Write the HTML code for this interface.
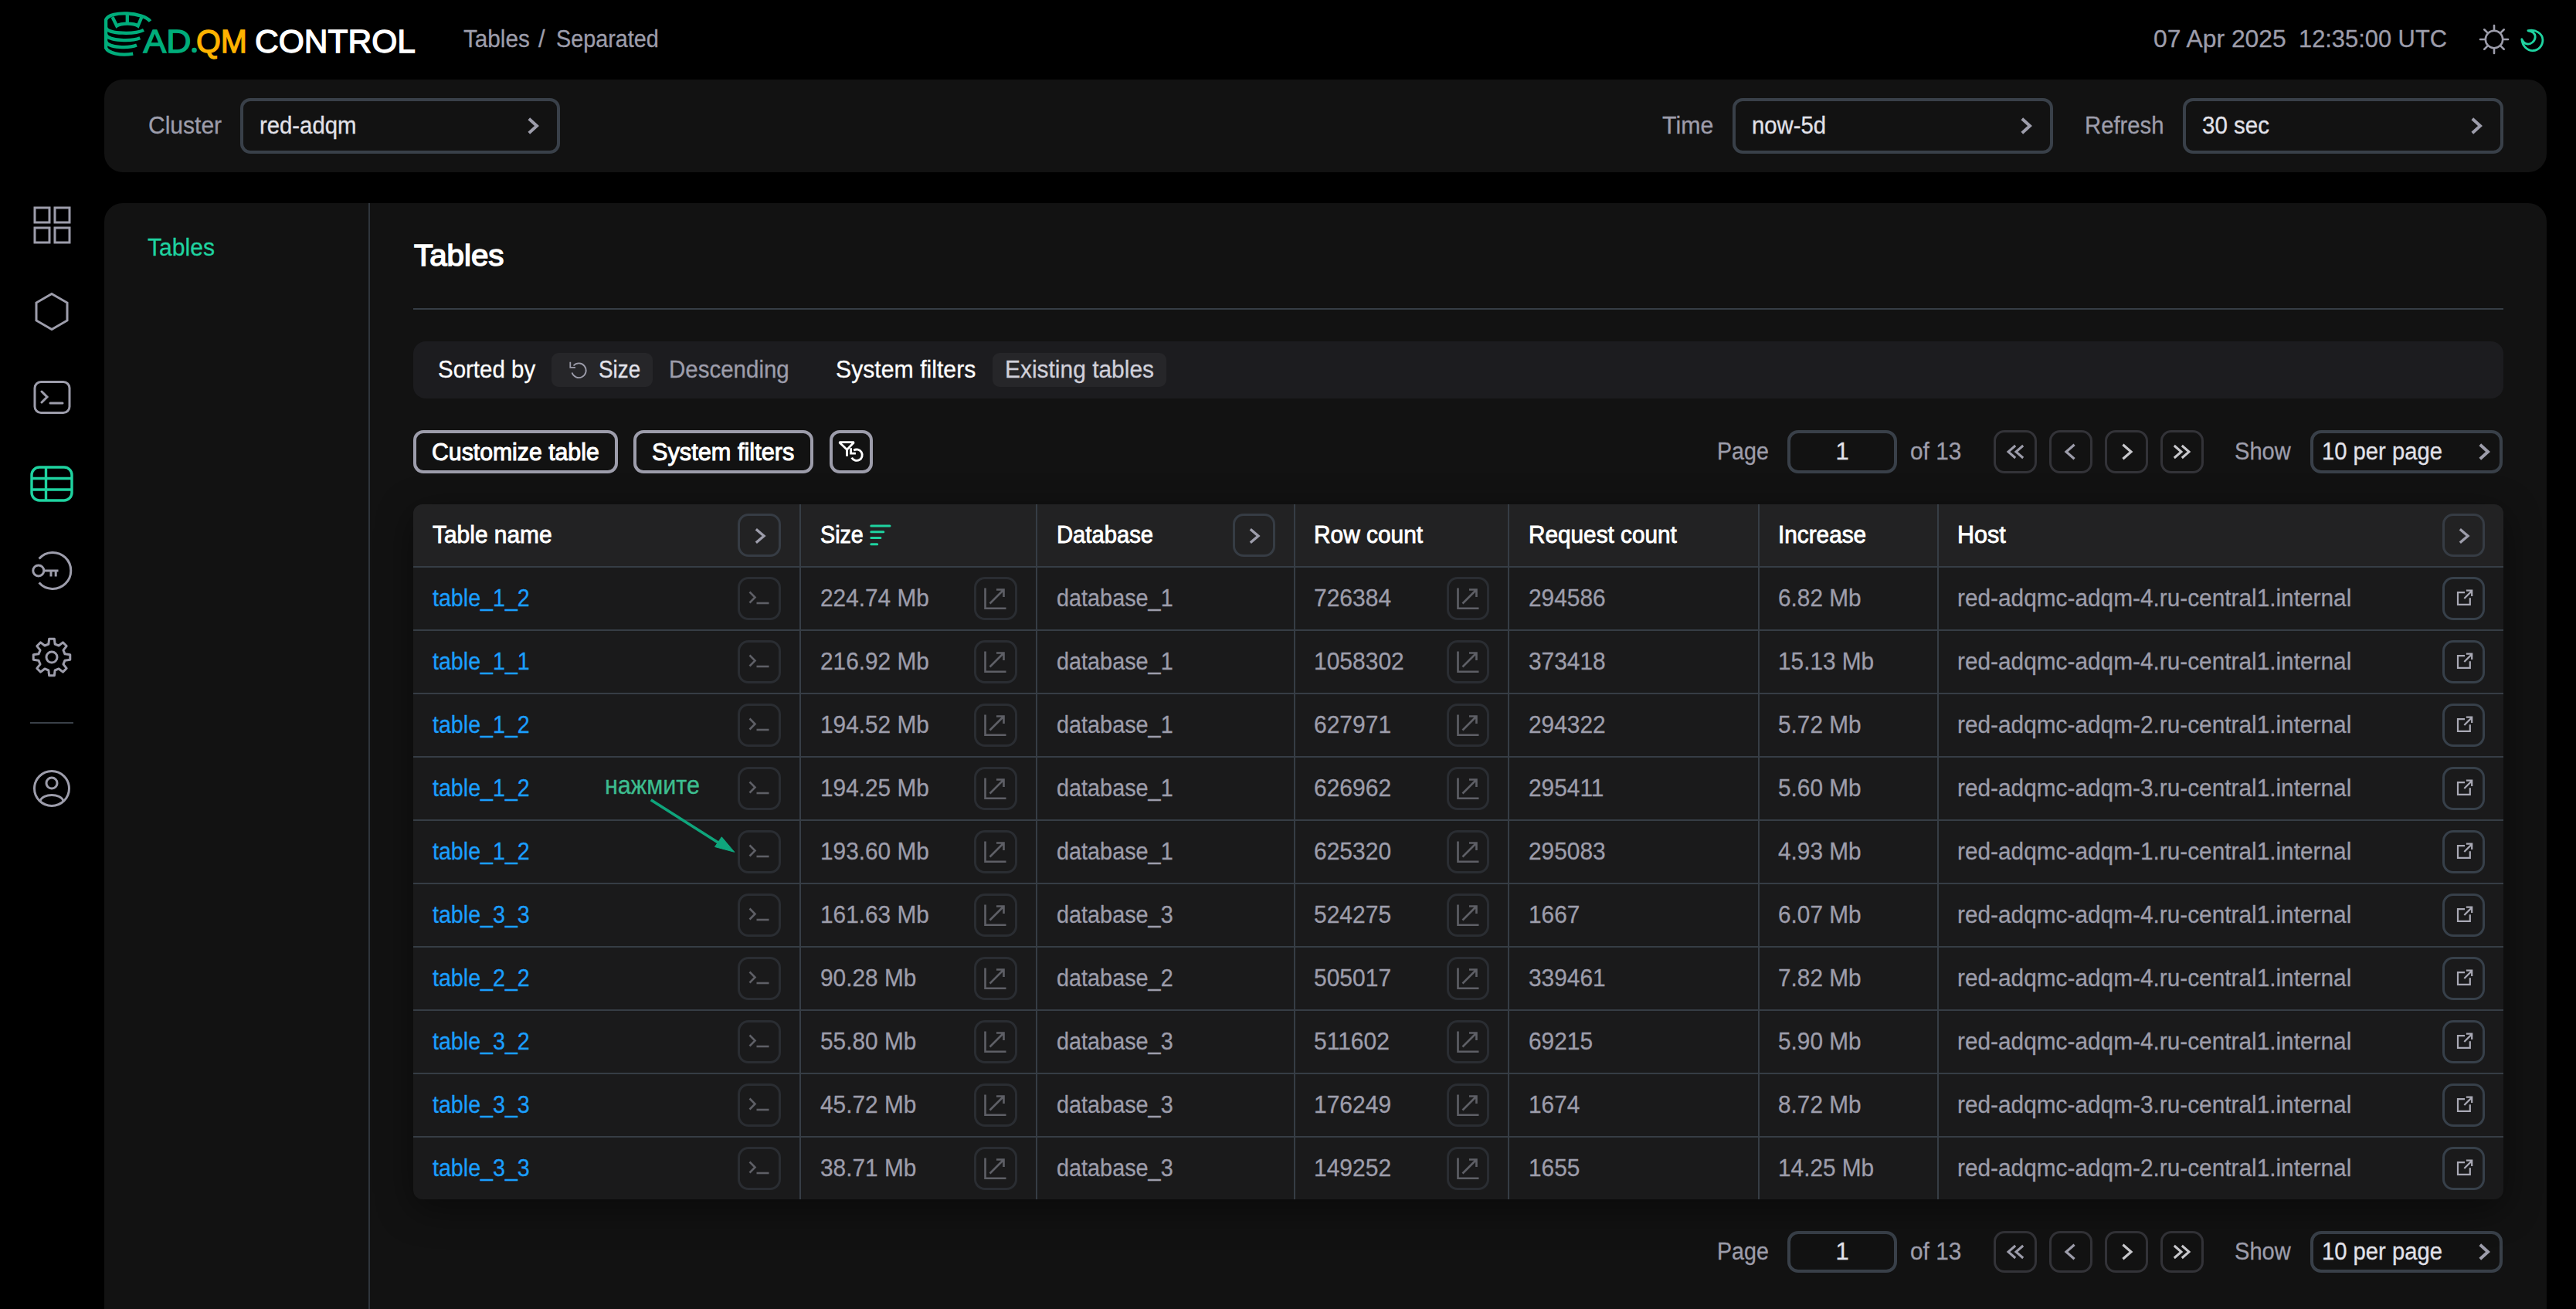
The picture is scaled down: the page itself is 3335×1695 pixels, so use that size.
<!DOCTYPE html>
<html><head><meta charset="utf-8"><title>ADQM Control - Tables</title>
<style>
html,body{margin:0;padding:0;background:#000000;width:3335px;height:1695px;overflow:hidden;font-family:"Liberation Sans",sans-serif;}
.t{position:absolute;white-space:nowrap;-webkit-text-stroke-width:0.3px;}
.b{position:absolute;box-sizing:border-box;}
.s{position:absolute;overflow:visible;}
</style></head><body>
<svg class="s" style="left:135.00px;top:16.00px" width="62" height="58" viewBox="0 0 62 58">
<g fill="none" stroke="#00ad7b" stroke-width="4.3">
<path d="M59.5 11.5 C 51 0, 8 -3, 2.1 9.5 L 2.1 46 C 5 52.5, 20 56.5, 37.2 53.6"/>
<path d="M2.1 20 C 6 28.5, 40 28.5, 51 22.8"/>
<path d="M2.1 29 C 6 37.5, 36 37.5, 46.3 33.2"/>
<path d="M2.1 38 C 6 46.5, 32 46.5, 42 42.6"/>
<path d="M10.5 6 L 16.2 17.5 C 22 13.6, 38 13.6, 43.6 17.5 L 48.5 6"/>
<path d="M29.8 3 L 29.8 14.2"/>
</g></svg>
<svg class="s" style="left:0;top:0" width="560" height="90" viewBox="0 0 560 90"><g font-family="Liberation Sans" font-size="42" stroke-width="1.3"><text x="185.5" y="68" fill="#00ad7b" stroke="#00ad7b" textLength="62" lengthAdjust="spacingAndGlyphs">AD</text><circle cx="251.5" cy="65" r="3.3" fill="#00ad7b"/><text x="254" y="68" fill="#ffb300" stroke="#ffb300" textLength="66" lengthAdjust="spacingAndGlyphs">QM</text><text x="330" y="68" fill="#ffffff" stroke="#ffffff" textLength="208" lengthAdjust="spacingAndGlyphs">CONTROL</text></g></svg>
<div class="t" style="left:599.60px;top:34.56px;font-size:31px;line-height:31px;color:#9d9dab;transform:scaleX(0.9577);transform-origin:0 0;">Tables</div>
<div class="t" style="left:697.00px;top:34.56px;font-size:31px;line-height:31px;color:#9d9dab;">/</div>
<div class="t" style="left:720.30px;top:34.56px;font-size:31px;line-height:31px;color:#9d9dab;transform:scaleX(0.9282);transform-origin:0 0;">Separated</div>
<div class="t" style="left:2788.20px;top:35.36px;font-size:31px;line-height:31px;color:#9d9dab;transform:scaleX(1.0272);transform-origin:0 0;">07 Apr 2025</div>
<div class="t" style="left:2976.00px;top:35.36px;font-size:31px;line-height:31px;color:#9d9dab;transform:scaleX(0.9949);transform-origin:0 0;">12:35:00 UTC</div>
<svg class="s" style="left:3207.00px;top:29.00px" width="44" height="44" viewBox="0 0 44 44"><g stroke="#9d9dab" stroke-width="2.6" stroke-linecap="round" fill="none"><circle cx="22" cy="22" r="11.2"/><line x1="34.80" y1="22.00" x2="40.00" y2="22.00"/><line x1="31.05" y1="31.05" x2="34.73" y2="34.73"/><line x1="22.00" y1="34.80" x2="22.00" y2="40.00"/><line x1="12.95" y1="31.05" x2="9.27" y2="34.73"/><line x1="9.20" y1="22.00" x2="4.00" y2="22.00"/><line x1="12.95" y1="12.95" x2="9.27" y2="9.27"/><line x1="22.00" y1="9.20" x2="22.00" y2="4.00"/><line x1="31.05" y1="12.95" x2="34.73" y2="9.27"/></g></svg>
<svg class="s" style="left:3260.00px;top:34.00px" width="36" height="36" viewBox="0 0 36 36"><path d="M12.5 6.2 C 18 6.5, 21.5 10, 21.3 14.2 C 21 19.5, 16 23, 12 22.7 C 9 22.5, 6.5 20, 4.8 16.8 C 5.5 25.5, 12 31, 18.5 30.8 C 25.5 30.6, 30.8 24.5, 30.6 17.5 C 30.4 10, 22 4, 12.5 6.2 Z" fill="none" stroke="#1fd3a0" stroke-width="2.7" stroke-linejoin="round" transform="translate(-0.2 -0.8) scale(1.05)"/></svg>
<div class="b" style="left:135.00px;top:103.00px;width:3162.00px;height:120.00px;background:#121212;border-radius:24px;"></div>
<div class="t" style="left:191.90px;top:146.76px;font-size:31px;line-height:31px;color:#9d9dab;transform:scaleX(0.9685);transform-origin:0 0;">Cluster</div>
<div class="b" style="left:311.00px;top:127.00px;width:414.00px;height:71.50px;border:4px solid #394049;border-radius:13px;"></div>
<div class="t" style="left:336.00px;top:146.76px;font-size:31px;line-height:31px;color:#e2e2ea;transform:scaleX(0.9451);transform-origin:0 0;">red-adqm</div>
<svg class="s" style="left:675.00px;top:142.70px" width="40" height="40" viewBox="0 0 40 40"><path d="M9.80 10.75 L20.00 20.00 L9.80 29.25" fill="none" stroke="#9d9dab" stroke-width="4.0" stroke-linejoin="miter" stroke-miterlimit="10"/></svg>
<div class="t" style="left:2151.70px;top:146.76px;font-size:31px;line-height:31px;color:#9d9dab;transform:scaleX(0.9788);transform-origin:0 0;">Time</div>
<div class="b" style="left:2243.30px;top:127.00px;width:414.40px;height:71.50px;border:4px solid #394049;border-radius:13px;"></div>
<div class="t" style="left:2268.30px;top:146.76px;font-size:31px;line-height:31px;color:#e2e2ea;transform:scaleX(0.9451);transform-origin:0 0;">now-5d</div>
<svg class="s" style="left:2607.70px;top:142.70px" width="40" height="40" viewBox="0 0 40 40"><path d="M9.80 10.75 L20.00 20.00 L9.80 29.25" fill="none" stroke="#9d9dab" stroke-width="4.0" stroke-linejoin="miter" stroke-miterlimit="10"/></svg>
<div class="t" style="left:2698.50px;top:146.76px;font-size:31px;line-height:31px;color:#9d9dab;transform:scaleX(0.9440);transform-origin:0 0;">Refresh</div>
<div class="b" style="left:2826.00px;top:127.00px;width:414.60px;height:71.50px;border:4px solid #394049;border-radius:13px;"></div>
<div class="t" style="left:2851.00px;top:146.76px;font-size:31px;line-height:31px;color:#e2e2ea;transform:scaleX(0.9511);transform-origin:0 0;">30 sec</div>
<svg class="s" style="left:3190.60px;top:142.70px" width="40" height="40" viewBox="0 0 40 40"><path d="M9.80 10.75 L20.00 20.00 L9.80 29.25" fill="none" stroke="#9d9dab" stroke-width="4.0" stroke-linejoin="miter" stroke-miterlimit="10"/></svg>
<svg class="s" style="left:40.00px;top:264.00px" width="54" height="54" viewBox="0 0 54 54"><g fill="none" stroke="#9d9dab" stroke-width="3"><rect x="5" y="5" width="19" height="19"/><rect x="31" y="5" width="19" height="19"/><rect x="5" y="31" width="19" height="19"/><rect x="31" y="31" width="19" height="19"/></g></svg>
<svg class="s" style="left:40.00px;top:376.00px" width="54" height="54" viewBox="0 0 54 54"><polygon points="27,4.5 47,16 47,39 27,50.5 7,39 7,16" fill="none" stroke="#9d9dab" stroke-width="3"/></svg>
<svg class="s" style="left:40.00px;top:490.00px" width="54" height="50" viewBox="0 0 54 50"><g fill="none" stroke="#9d9dab" stroke-width="3" stroke-linecap="round"><rect x="5" y="4.5" width="45" height="40" rx="8"/><path d="M14 17 L 21 24 L 14 31"/><path d="M25 32 L 41 32"/></g></svg>
<svg class="s" style="left:37.00px;top:600.00px" width="60" height="54" viewBox="0 0 60 54"><g fill="none" stroke="#1fd3a0" stroke-width="3.4"><rect x="4" y="5" width="52" height="43" rx="10"/><path d="M4 19.5 L56 19.5 M4 34 L56 34 M22.5 5 L22.5 48"/></g></svg>
<svg class="s" style="left:37.00px;top:707.00px" width="60" height="64" viewBox="0 0 60 64"><g fill="none" stroke="#9d9dab" stroke-width="3"><path d="M13.6 16.4 A 23.5 23.5 0 1 1 13.6 47.4"/><circle cx="12.8" cy="31.9" r="7"/><path d="M19.8 31.9 L 38.5 31.9 M29 31.9 L29 39.5 M35.2 31.9 L35.2 39.5"/></g></svg>
<svg class="s" style="left:40.00px;top:824.00px" width="54" height="54" viewBox="0 0 54 54"><g fill="none" stroke="#9d9dab" stroke-width="3" stroke-linejoin="round"><polygon points="44.00,22.84 50.77,23.65 50.77,30.35 44.00,31.16 41.96,36.08 46.17,41.44 41.44,46.17 36.08,41.96 31.16,44.00 30.35,50.77 23.65,50.77 22.84,44.00 17.92,41.96 12.56,46.17 7.83,41.44 12.04,36.08 10.00,31.16 3.23,30.35 3.23,23.65 10.00,22.84 12.04,17.92 7.83,12.56 12.56,7.83 17.92,12.04 22.84,10.00 23.65,3.23 30.35,3.23 31.16,10.00 36.08,12.04 41.44,7.83 46.17,12.56 41.96,17.92"/><circle cx="27" cy="27" r="7"/></g></svg>
<div class="b" style="left:39.00px;top:934.50px;width:56.00px;height:2.50px;background:#3a4048;"></div>
<svg class="s" style="left:40.00px;top:994.00px" width="54" height="54" viewBox="0 0 54 54"><g fill="none" stroke="#9d9dab" stroke-width="3"><circle cx="27" cy="27" r="22.5"/><circle cx="27" cy="20" r="7"/><path d="M12 43 C 16 33, 38 33, 42 43"/></g></svg>
<div class="b" style="left:135.00px;top:263.00px;width:3162.00px;height:1497.00px;background:#121212;border-radius:24px;"></div>
<div class="b" style="left:477.00px;top:263.00px;width:2.00px;height:1432.00px;background:#2f353c;"></div>
<div class="t" style="left:191.00px;top:304.76px;font-size:31px;line-height:31px;color:#1fd3a0;transform:scaleX(0.9700);transform-origin:0 0;">Tables</div>
<div class="t" style="left:536.00px;top:312.01px;font-size:38.5px;line-height:38.5px;color:#ffffff;-webkit-text-stroke:1.5px #ffffff;transform:scaleX(1.0470);transform-origin:0 0;">Tables</div>
<div class="b" style="left:535.00px;top:399.00px;width:2706.00px;height:2.00px;background:#363d45;"></div>
<div class="b" style="left:535.00px;top:441.50px;width:2706.00px;height:74.50px;background:#1c1c1f;border-radius:16px;"></div>
<div class="t" style="left:566.90px;top:462.76px;font-size:31px;line-height:31px;color:#ffffff;transform:scaleX(0.9504);transform-origin:0 0;">Sorted by</div>
<div class="b" style="left:714.10px;top:457.20px;width:130.70px;height:43.70px;background:#262629;border-radius:9px;"></div>
<svg class="s" style="left:734.00px;top:465.00px" width="28" height="28" viewBox="0 0 28 28"><g fill="none" stroke="#9d9dab" stroke-width="1.8"><path d="M6.5 17.5 A 9.3 9.3 0 1 0 8.5 8.5"/><path d="M4.3 3.8 L 4.3 10.9 L 11 10.9"/></g></svg>
<div class="t" style="left:774.70px;top:462.76px;font-size:31px;line-height:31px;color:#e2e2ea;transform:scaleX(0.8973);transform-origin:0 0;">Size</div>
<div class="t" style="left:866.00px;top:462.76px;font-size:31px;line-height:31px;color:#9d9dab;transform:scaleX(0.9514);transform-origin:0 0;">Descending</div>
<div class="t" style="left:1082.40px;top:462.76px;font-size:31px;line-height:31px;color:#ffffff;transform:scaleX(0.9747);transform-origin:0 0;">System filters</div>
<div class="b" style="left:1285.00px;top:457.20px;width:225.00px;height:43.70px;background:#262629;border-radius:9px;"></div>
<div class="t" style="left:1301.00px;top:462.76px;font-size:31px;line-height:31px;color:#d0d0da;transform:scaleX(0.9656);transform-origin:0 0;">Existing tables</div>
<div class="b" style="left:535.40px;top:557.00px;width:264.40px;height:55.60px;border:4px solid #9d9dab;border-radius:13px;"></div>
<div class="t" style="left:559.00px;top:569.76px;font-size:31px;line-height:31px;color:#ffffff;-webkit-text-stroke:1.0px #ffffff;transform:scaleX(0.9749);transform-origin:0 0;">Customize table</div>
<div class="b" style="left:820.40px;top:557.00px;width:232.90px;height:55.60px;border:4px solid #9d9dab;border-radius:13px;"></div>
<div class="t" style="left:844.40px;top:569.76px;font-size:31px;line-height:31px;color:#ffffff;-webkit-text-stroke:1.0px #ffffff;transform:scaleX(0.9914);transform-origin:0 0;">System filters</div>
<div class="b" style="left:1074.00px;top:557.00px;width:56.00px;height:55.60px;border:4px solid #9d9dab;border-radius:13px;"></div>
<svg class="s" style="left:1074.00px;top:557.00px" width="56" height="56" viewBox="0 0 56 56"><g fill="none" stroke="#fff" stroke-width="2.8"><path d="M12.6 15.7 L 31.6 15.7 L 22.5 25.3 Z" stroke-linejoin="bevel"/><path d="M22.5 25 L 22.5 33.8"/><path d="M28.7 35.6 A 7.2 7.2 0 1 0 31.2 26.1"/><path d="M27.6 23.3 L 27.6 30.2 L 33.9 30.2"/></g></svg>
<div class="t" style="left:2222.60px;top:569.06px;font-size:31px;line-height:31px;color:#9d9dab;transform:scaleX(0.9242);transform-origin:0 0;">Page</div>
<div class="b" style="left:2314.20px;top:557.20px;width:141.50px;height:55.40px;border:4px solid #394049;border-radius:14px;"></div>
<div class="t" style="left:2376.50px;top:569.06px;font-size:31px;line-height:31px;color:#e2e2ea;">1</div>
<div class="t" style="left:2473.20px;top:569.06px;font-size:31px;line-height:31px;color:#9d9dab;transform:scaleX(0.9612);transform-origin:0 0;">of 13</div>
<div class="b" style="left:2581.40px;top:557.20px;width:55.40px;height:55.40px;border:3.8px solid #333338;border-radius:14px;"></div>
<div class="b" style="left:2653.30px;top:557.20px;width:55.40px;height:55.40px;border:3.8px solid #333338;border-radius:14px;"></div>
<div class="b" style="left:2725.20px;top:557.20px;width:55.40px;height:55.40px;border:3.8px solid #333338;border-radius:14px;"></div>
<div class="b" style="left:2797.30px;top:557.20px;width:55.40px;height:55.40px;border:3.8px solid #333338;border-radius:14px;"></div>
<svg class="s" style="left:2579.80px;top:564.90px" width="40" height="40" viewBox="0 0 40 40"><path d="M29.20 12.00 L20.00 20.00 L29.20 28.00" fill="none" stroke="#9d9dab" stroke-width="3.0" stroke-linejoin="miter" stroke-miterlimit="10"/></svg>
<svg class="s" style="left:2590.20px;top:564.90px" width="40" height="40" viewBox="0 0 40 40"><path d="M29.20 12.00 L20.00 20.00 L29.20 28.00" fill="none" stroke="#9d9dab" stroke-width="3.0" stroke-linejoin="miter" stroke-miterlimit="10"/></svg>
<svg class="s" style="left:2654.60px;top:564.90px" width="40" height="40" viewBox="0 0 40 40"><path d="M30.60 10.75 L20.00 20.00 L30.60 29.25" fill="none" stroke="#9d9dab" stroke-width="3.2" stroke-linejoin="miter" stroke-miterlimit="10"/></svg>
<svg class="s" style="left:2739.40px;top:564.90px" width="40" height="40" viewBox="0 0 40 40"><path d="M9.40 10.75 L20.00 20.00 L9.40 29.25" fill="none" stroke="#c8c8cc" stroke-width="3.2" stroke-linejoin="miter" stroke-miterlimit="10"/></svg>
<svg class="s" style="left:2803.50px;top:564.90px" width="40" height="40" viewBox="0 0 40 40"><path d="M10.80 12.00 L20.00 20.00 L10.80 28.00" fill="none" stroke="#c8c8cc" stroke-width="3.0" stroke-linejoin="miter" stroke-miterlimit="10"/></svg>
<svg class="s" style="left:2813.90px;top:564.90px" width="40" height="40" viewBox="0 0 40 40"><path d="M10.80 12.00 L20.00 20.00 L10.80 28.00" fill="none" stroke="#c8c8cc" stroke-width="3.0" stroke-linejoin="miter" stroke-miterlimit="10"/></svg>
<div class="t" style="left:2893.40px;top:569.06px;font-size:31px;line-height:31px;color:#9d9dab;transform:scaleX(0.9388);transform-origin:0 0;">Show</div>
<div class="b" style="left:2991.00px;top:557.20px;width:249.30px;height:55.40px;border:4px solid #394049;border-radius:14px;"></div>
<div class="t" style="left:3005.80px;top:569.06px;font-size:31px;line-height:31px;color:#e2e2ea;transform:scaleX(0.9422);transform-origin:0 0;">10 per page</div>
<svg class="s" style="left:3200.50px;top:564.90px" width="40" height="40" viewBox="0 0 40 40"><path d="M9.80 10.75 L20.00 20.00 L9.80 29.25" fill="none" stroke="#9d9dab" stroke-width="4.0" stroke-linejoin="miter" stroke-miterlimit="10"/></svg>
<div class="t" style="left:2222.60px;top:1605.26px;font-size:31px;line-height:31px;color:#9d9dab;transform:scaleX(0.9242);transform-origin:0 0;">Page</div>
<div class="b" style="left:2314.20px;top:1593.70px;width:141.50px;height:54.80px;border:4px solid #394049;border-radius:14px;"></div>
<div class="t" style="left:2376.50px;top:1605.26px;font-size:31px;line-height:31px;color:#e2e2ea;">1</div>
<div class="t" style="left:2473.20px;top:1605.26px;font-size:31px;line-height:31px;color:#9d9dab;transform:scaleX(0.9612);transform-origin:0 0;">of 13</div>
<div class="b" style="left:2581.40px;top:1593.70px;width:55.40px;height:54.80px;border:3.8px solid #333338;border-radius:14px;"></div>
<div class="b" style="left:2653.30px;top:1593.70px;width:55.40px;height:54.80px;border:3.8px solid #333338;border-radius:14px;"></div>
<div class="b" style="left:2725.20px;top:1593.70px;width:55.40px;height:54.80px;border:3.8px solid #333338;border-radius:14px;"></div>
<div class="b" style="left:2797.30px;top:1593.70px;width:55.40px;height:54.80px;border:3.8px solid #333338;border-radius:14px;"></div>
<svg class="s" style="left:2579.80px;top:1601.10px" width="40" height="40" viewBox="0 0 40 40"><path d="M29.20 12.00 L20.00 20.00 L29.20 28.00" fill="none" stroke="#9d9dab" stroke-width="3.0" stroke-linejoin="miter" stroke-miterlimit="10"/></svg>
<svg class="s" style="left:2590.20px;top:1601.10px" width="40" height="40" viewBox="0 0 40 40"><path d="M29.20 12.00 L20.00 20.00 L29.20 28.00" fill="none" stroke="#9d9dab" stroke-width="3.0" stroke-linejoin="miter" stroke-miterlimit="10"/></svg>
<svg class="s" style="left:2654.60px;top:1601.10px" width="40" height="40" viewBox="0 0 40 40"><path d="M30.60 10.75 L20.00 20.00 L30.60 29.25" fill="none" stroke="#9d9dab" stroke-width="3.2" stroke-linejoin="miter" stroke-miterlimit="10"/></svg>
<svg class="s" style="left:2739.40px;top:1601.10px" width="40" height="40" viewBox="0 0 40 40"><path d="M9.40 10.75 L20.00 20.00 L9.40 29.25" fill="none" stroke="#c8c8cc" stroke-width="3.2" stroke-linejoin="miter" stroke-miterlimit="10"/></svg>
<svg class="s" style="left:2803.50px;top:1601.10px" width="40" height="40" viewBox="0 0 40 40"><path d="M10.80 12.00 L20.00 20.00 L10.80 28.00" fill="none" stroke="#c8c8cc" stroke-width="3.0" stroke-linejoin="miter" stroke-miterlimit="10"/></svg>
<svg class="s" style="left:2813.90px;top:1601.10px" width="40" height="40" viewBox="0 0 40 40"><path d="M10.80 12.00 L20.00 20.00 L10.80 28.00" fill="none" stroke="#c8c8cc" stroke-width="3.0" stroke-linejoin="miter" stroke-miterlimit="10"/></svg>
<div class="t" style="left:2893.40px;top:1605.26px;font-size:31px;line-height:31px;color:#9d9dab;transform:scaleX(0.9388);transform-origin:0 0;">Show</div>
<div class="b" style="left:2991.00px;top:1593.70px;width:249.30px;height:54.80px;border:4px solid #394049;border-radius:14px;"></div>
<div class="t" style="left:3005.80px;top:1605.26px;font-size:31px;line-height:31px;color:#e2e2ea;transform:scaleX(0.9422);transform-origin:0 0;">10 per page</div>
<svg class="s" style="left:3200.50px;top:1601.10px" width="40" height="40" viewBox="0 0 40 40"><path d="M9.80 10.75 L20.00 20.00 L9.80 29.25" fill="none" stroke="#9d9dab" stroke-width="4.0" stroke-linejoin="miter" stroke-miterlimit="10"/></svg>
<div class="b" style="left:535px;top:653px;width:2706px;height:899.5999999999999px;background:#1a1a1b;border-radius:12px;overflow:hidden;box-shadow:0 12px 48px rgba(0,0,0,0.45)"><div style="position:absolute;left:0;top:0;right:0;height:81px;background:#222223"></div></div>
<div class="b" style="left:1035.20px;top:653.00px;width:2.00px;height:899.60px;background:#363d45;"></div>
<div class="b" style="left:1341.00px;top:653.00px;width:2.00px;height:899.60px;background:#363d45;"></div>
<div class="b" style="left:1674.80px;top:653.00px;width:2.00px;height:899.60px;background:#363d45;"></div>
<div class="b" style="left:1952.00px;top:653.00px;width:2.00px;height:899.60px;background:#363d45;"></div>
<div class="b" style="left:2276.20px;top:653.00px;width:2.00px;height:899.60px;background:#363d45;"></div>
<div class="b" style="left:2507.80px;top:653.00px;width:2.00px;height:899.60px;background:#363d45;"></div>
<div class="b" style="left:535.00px;top:733.00px;width:2706.00px;height:2.00px;background:#363d45;"></div>
<div class="b" style="left:535.00px;top:815.00px;width:2706.00px;height:2.00px;background:#363d45;"></div>
<div class="b" style="left:535.00px;top:897.00px;width:2706.00px;height:2.00px;background:#363d45;"></div>
<div class="b" style="left:535.00px;top:979.00px;width:2706.00px;height:2.00px;background:#363d45;"></div>
<div class="b" style="left:535.00px;top:1061.00px;width:2706.00px;height:2.00px;background:#363d45;"></div>
<div class="b" style="left:535.00px;top:1143.00px;width:2706.00px;height:2.00px;background:#363d45;"></div>
<div class="b" style="left:535.00px;top:1225.00px;width:2706.00px;height:2.00px;background:#363d45;"></div>
<div class="b" style="left:535.00px;top:1307.00px;width:2706.00px;height:2.00px;background:#363d45;"></div>
<div class="b" style="left:535.00px;top:1389.00px;width:2706.00px;height:2.00px;background:#363d45;"></div>
<div class="b" style="left:535.00px;top:1471.00px;width:2706.00px;height:2.00px;background:#363d45;"></div>
<div class="t" style="left:559.60px;top:676.76px;font-size:31px;line-height:31px;color:#ffffff;-webkit-text-stroke:0.85px #ffffff;transform:scaleX(0.9652);transform-origin:0 0;">Table name</div>
<div class="t" style="left:1062.10px;top:676.76px;font-size:31px;line-height:31px;color:#ffffff;-webkit-text-stroke:0.85px #ffffff;transform:scaleX(0.9254);transform-origin:0 0;">Size</div>
<div class="t" style="left:1368.00px;top:676.76px;font-size:31px;line-height:31px;color:#ffffff;-webkit-text-stroke:0.85px #ffffff;transform:scaleX(0.9421);transform-origin:0 0;">Database</div>
<div class="t" style="left:1701.30px;top:676.76px;font-size:31px;line-height:31px;color:#ffffff;-webkit-text-stroke:0.85px #ffffff;transform:scaleX(0.9633);transform-origin:0 0;">Row count</div>
<div class="t" style="left:1978.90px;top:676.76px;font-size:31px;line-height:31px;color:#ffffff;-webkit-text-stroke:0.85px #ffffff;transform:scaleX(0.9597);transform-origin:0 0;">Request count</div>
<div class="t" style="left:2302.20px;top:676.76px;font-size:31px;line-height:31px;color:#ffffff;-webkit-text-stroke:0.85px #ffffff;transform:scaleX(0.9598);transform-origin:0 0;">Increase</div>
<div class="t" style="left:2534.30px;top:676.76px;font-size:31px;line-height:31px;color:#ffffff;-webkit-text-stroke:0.85px #ffffff;transform:scaleX(0.9842);transform-origin:0 0;">Host</div>
<div class="b" style="left:955.20px;top:665.30px;width:55.50px;height:55.50px;border:3.6px solid #363c44;border-radius:14px;"></div>
<svg class="s" style="left:968.70px;top:673.50px" width="40" height="40" viewBox="0 0 40 40"><path d="M9.80 11.25 L20.00 20.00 L9.80 28.75" fill="none" stroke="#9d9dab" stroke-width="3.4" stroke-linejoin="miter" stroke-miterlimit="10"/></svg>
<div class="b" style="left:1595.50px;top:665.30px;width:55.50px;height:55.50px;border:3.6px solid #363c44;border-radius:14px;"></div>
<svg class="s" style="left:1609.00px;top:673.50px" width="40" height="40" viewBox="0 0 40 40"><path d="M9.80 11.25 L20.00 20.00 L9.80 28.75" fill="none" stroke="#9d9dab" stroke-width="3.4" stroke-linejoin="miter" stroke-miterlimit="10"/></svg>
<div class="b" style="left:3161.70px;top:665.30px;width:55.50px;height:55.50px;border:3.6px solid #363c44;border-radius:14px;"></div>
<svg class="s" style="left:3175.20px;top:673.50px" width="40" height="40" viewBox="0 0 40 40"><path d="M9.80 11.25 L20.00 20.00 L9.80 28.75" fill="none" stroke="#9d9dab" stroke-width="3.4" stroke-linejoin="miter" stroke-miterlimit="10"/></svg>
<svg class="s" style="left:1122.00px;top:676.00px" width="36" height="34" viewBox="0 0 36 34"><g stroke="#1fd3a0" stroke-width="3" stroke-linecap="round"><path d="M5.8 5 L 30 5 M5.8 12.8 L 21.8 12.8 M5.8 20.6 L 17.9 20.6 M5.8 28.7 L 13.7 28.7"/></g></svg>
<div class="t" style="left:559.60px;top:758.76px;font-size:31px;line-height:31px;color:#1a9fff;transform:scaleX(0.9231);transform-origin:0 0;">table_1_2</div>
<div class="t" style="left:1062.10px;top:758.76px;font-size:31px;line-height:31px;color:#9d9dab;transform:scaleX(0.9619);transform-origin:0 0;">224.74 Mb</div>
<div class="t" style="left:1368.00px;top:758.76px;font-size:31px;line-height:31px;color:#9d9dab;transform:scaleX(0.9299);transform-origin:0 0;">database_1</div>
<div class="t" style="left:1701.30px;top:758.76px;font-size:31px;line-height:31px;color:#9d9dab;transform:scaleX(0.9675);transform-origin:0 0;">726384</div>
<div class="t" style="left:1978.90px;top:758.76px;font-size:31px;line-height:31px;color:#9d9dab;transform:scaleX(0.9636);transform-origin:0 0;">294586</div>
<div class="t" style="left:2302.20px;top:758.76px;font-size:31px;line-height:31px;color:#9d9dab;transform:scaleX(0.9608);transform-origin:0 0;">6.82 Mb</div>
<div class="t" style="left:2534.30px;top:758.76px;font-size:31px;line-height:31px;color:#9d9dab;transform:scaleX(0.9615);transform-origin:0 0;">red-adqmc-adqm-4.ru-central1.internal</div>
<div class="b" style="left:955.20px;top:747.00px;width:55.50px;height:55.50px;border:3.6px solid #2a2d32;border-radius:14px;"></div>
<svg class="s" style="left:955.20px;top:747.00px" width="56" height="56" viewBox="0 0 56 56"><g fill="none" stroke="#5e5f66" stroke-width="2.6"><path d="M15.5 19.5 L 22.5 26.5 L 15.5 33.5"/><path d="M24.5 34 L 40.5 34"/></g></svg>
<div class="b" style="left:1261.30px;top:747.00px;width:55.50px;height:55.50px;border:3.6px solid #2a2d32;border-radius:14px;"></div>
<svg class="s" style="left:1261.30px;top:747.00px" width="56" height="56" viewBox="0 0 56 56"><g fill="none" stroke="#5e5f66" stroke-width="2.6"><path d="M14.5 14.5 L 14.5 40.7 L 41.5 40.7"/><path d="M20.5 34.5 L 38.5 16.5 M 29 16.5 L 38.5 16.5 L 38.5 26"/></g></svg>
<div class="b" style="left:1872.70px;top:747.00px;width:55.50px;height:55.50px;border:3.6px solid #2a2d32;border-radius:14px;"></div>
<svg class="s" style="left:1872.70px;top:747.00px" width="56" height="56" viewBox="0 0 56 56"><g fill="none" stroke="#5e5f66" stroke-width="2.6"><path d="M14.5 14.5 L 14.5 40.7 L 41.5 40.7"/><path d="M20.5 34.5 L 38.5 16.5 M 29 16.5 L 38.5 16.5 L 38.5 26"/></g></svg>
<div class="b" style="left:3161.50px;top:747.00px;width:55.50px;height:55.50px;border:3.6px solid #37404a;border-radius:14px;"></div>
<svg class="s" style="left:3161.50px;top:747.00px" width="56" height="56" viewBox="0 0 56 56"><g fill="none" stroke="#a9a9b5" stroke-width="2.2"><path d="M29 20.1 L 20 20.1 L 20 35.9 L 35.8 35.9 L 35.8 27.3"/><path d="M28.3 28 L 38.2 18.1 M 30.9 17.6 L 38.2 17.6 L 38.2 24.9"/></g></svg>
<div class="t" style="left:559.60px;top:840.76px;font-size:31px;line-height:31px;color:#1a9fff;transform:scaleX(0.9231);transform-origin:0 0;">table_1_1</div>
<div class="t" style="left:1062.10px;top:840.76px;font-size:31px;line-height:31px;color:#9d9dab;transform:scaleX(0.9619);transform-origin:0 0;">216.92 Mb</div>
<div class="t" style="left:1368.00px;top:840.76px;font-size:31px;line-height:31px;color:#9d9dab;transform:scaleX(0.9299);transform-origin:0 0;">database_1</div>
<div class="t" style="left:1701.30px;top:840.76px;font-size:31px;line-height:31px;color:#9d9dab;transform:scaleX(0.9675);transform-origin:0 0;">1058302</div>
<div class="t" style="left:1978.90px;top:840.76px;font-size:31px;line-height:31px;color:#9d9dab;transform:scaleX(0.9636);transform-origin:0 0;">373418</div>
<div class="t" style="left:2302.20px;top:840.76px;font-size:31px;line-height:31px;color:#9d9dab;transform:scaleX(0.9608);transform-origin:0 0;">15.13 Mb</div>
<div class="t" style="left:2534.30px;top:840.76px;font-size:31px;line-height:31px;color:#9d9dab;transform:scaleX(0.9615);transform-origin:0 0;">red-adqmc-adqm-4.ru-central1.internal</div>
<div class="b" style="left:955.20px;top:829.00px;width:55.50px;height:55.50px;border:3.6px solid #2a2d32;border-radius:14px;"></div>
<svg class="s" style="left:955.20px;top:829.00px" width="56" height="56" viewBox="0 0 56 56"><g fill="none" stroke="#5e5f66" stroke-width="2.6"><path d="M15.5 19.5 L 22.5 26.5 L 15.5 33.5"/><path d="M24.5 34 L 40.5 34"/></g></svg>
<div class="b" style="left:1261.30px;top:829.00px;width:55.50px;height:55.50px;border:3.6px solid #2a2d32;border-radius:14px;"></div>
<svg class="s" style="left:1261.30px;top:829.00px" width="56" height="56" viewBox="0 0 56 56"><g fill="none" stroke="#5e5f66" stroke-width="2.6"><path d="M14.5 14.5 L 14.5 40.7 L 41.5 40.7"/><path d="M20.5 34.5 L 38.5 16.5 M 29 16.5 L 38.5 16.5 L 38.5 26"/></g></svg>
<div class="b" style="left:1872.70px;top:829.00px;width:55.50px;height:55.50px;border:3.6px solid #2a2d32;border-radius:14px;"></div>
<svg class="s" style="left:1872.70px;top:829.00px" width="56" height="56" viewBox="0 0 56 56"><g fill="none" stroke="#5e5f66" stroke-width="2.6"><path d="M14.5 14.5 L 14.5 40.7 L 41.5 40.7"/><path d="M20.5 34.5 L 38.5 16.5 M 29 16.5 L 38.5 16.5 L 38.5 26"/></g></svg>
<div class="b" style="left:3161.50px;top:829.00px;width:55.50px;height:55.50px;border:3.6px solid #37404a;border-radius:14px;"></div>
<svg class="s" style="left:3161.50px;top:829.00px" width="56" height="56" viewBox="0 0 56 56"><g fill="none" stroke="#a9a9b5" stroke-width="2.2"><path d="M29 20.1 L 20 20.1 L 20 35.9 L 35.8 35.9 L 35.8 27.3"/><path d="M28.3 28 L 38.2 18.1 M 30.9 17.6 L 38.2 17.6 L 38.2 24.9"/></g></svg>
<div class="t" style="left:559.60px;top:922.76px;font-size:31px;line-height:31px;color:#1a9fff;transform:scaleX(0.9231);transform-origin:0 0;">table_1_2</div>
<div class="t" style="left:1062.10px;top:922.76px;font-size:31px;line-height:31px;color:#9d9dab;transform:scaleX(0.9619);transform-origin:0 0;">194.52 Mb</div>
<div class="t" style="left:1368.00px;top:922.76px;font-size:31px;line-height:31px;color:#9d9dab;transform:scaleX(0.9299);transform-origin:0 0;">database_1</div>
<div class="t" style="left:1701.30px;top:922.76px;font-size:31px;line-height:31px;color:#9d9dab;transform:scaleX(0.9675);transform-origin:0 0;">627971</div>
<div class="t" style="left:1978.90px;top:922.76px;font-size:31px;line-height:31px;color:#9d9dab;transform:scaleX(0.9636);transform-origin:0 0;">294322</div>
<div class="t" style="left:2302.20px;top:922.76px;font-size:31px;line-height:31px;color:#9d9dab;transform:scaleX(0.9608);transform-origin:0 0;">5.72 Mb</div>
<div class="t" style="left:2534.30px;top:922.76px;font-size:31px;line-height:31px;color:#9d9dab;transform:scaleX(0.9615);transform-origin:0 0;">red-adqmc-adqm-2.ru-central1.internal</div>
<div class="b" style="left:955.20px;top:911.00px;width:55.50px;height:55.50px;border:3.6px solid #2a2d32;border-radius:14px;"></div>
<svg class="s" style="left:955.20px;top:911.00px" width="56" height="56" viewBox="0 0 56 56"><g fill="none" stroke="#5e5f66" stroke-width="2.6"><path d="M15.5 19.5 L 22.5 26.5 L 15.5 33.5"/><path d="M24.5 34 L 40.5 34"/></g></svg>
<div class="b" style="left:1261.30px;top:911.00px;width:55.50px;height:55.50px;border:3.6px solid #2a2d32;border-radius:14px;"></div>
<svg class="s" style="left:1261.30px;top:911.00px" width="56" height="56" viewBox="0 0 56 56"><g fill="none" stroke="#5e5f66" stroke-width="2.6"><path d="M14.5 14.5 L 14.5 40.7 L 41.5 40.7"/><path d="M20.5 34.5 L 38.5 16.5 M 29 16.5 L 38.5 16.5 L 38.5 26"/></g></svg>
<div class="b" style="left:1872.70px;top:911.00px;width:55.50px;height:55.50px;border:3.6px solid #2a2d32;border-radius:14px;"></div>
<svg class="s" style="left:1872.70px;top:911.00px" width="56" height="56" viewBox="0 0 56 56"><g fill="none" stroke="#5e5f66" stroke-width="2.6"><path d="M14.5 14.5 L 14.5 40.7 L 41.5 40.7"/><path d="M20.5 34.5 L 38.5 16.5 M 29 16.5 L 38.5 16.5 L 38.5 26"/></g></svg>
<div class="b" style="left:3161.50px;top:911.00px;width:55.50px;height:55.50px;border:3.6px solid #37404a;border-radius:14px;"></div>
<svg class="s" style="left:3161.50px;top:911.00px" width="56" height="56" viewBox="0 0 56 56"><g fill="none" stroke="#a9a9b5" stroke-width="2.2"><path d="M29 20.1 L 20 20.1 L 20 35.9 L 35.8 35.9 L 35.8 27.3"/><path d="M28.3 28 L 38.2 18.1 M 30.9 17.6 L 38.2 17.6 L 38.2 24.9"/></g></svg>
<div class="t" style="left:559.60px;top:1004.76px;font-size:31px;line-height:31px;color:#1a9fff;transform:scaleX(0.9231);transform-origin:0 0;">table_1_2</div>
<div class="t" style="left:1062.10px;top:1004.76px;font-size:31px;line-height:31px;color:#9d9dab;transform:scaleX(0.9619);transform-origin:0 0;">194.25 Mb</div>
<div class="t" style="left:1368.00px;top:1004.76px;font-size:31px;line-height:31px;color:#9d9dab;transform:scaleX(0.9299);transform-origin:0 0;">database_1</div>
<div class="t" style="left:1701.30px;top:1004.76px;font-size:31px;line-height:31px;color:#9d9dab;transform:scaleX(0.9675);transform-origin:0 0;">626962</div>
<div class="t" style="left:1978.90px;top:1004.76px;font-size:31px;line-height:31px;color:#9d9dab;transform:scaleX(0.9636);transform-origin:0 0;">295411</div>
<div class="t" style="left:2302.20px;top:1004.76px;font-size:31px;line-height:31px;color:#9d9dab;transform:scaleX(0.9608);transform-origin:0 0;">5.60 Mb</div>
<div class="t" style="left:2534.30px;top:1004.76px;font-size:31px;line-height:31px;color:#9d9dab;transform:scaleX(0.9615);transform-origin:0 0;">red-adqmc-adqm-3.ru-central1.internal</div>
<div class="b" style="left:955.20px;top:993.00px;width:55.50px;height:55.50px;border:3.6px solid #2a2d32;border-radius:14px;"></div>
<svg class="s" style="left:955.20px;top:993.00px" width="56" height="56" viewBox="0 0 56 56"><g fill="none" stroke="#5e5f66" stroke-width="2.6"><path d="M15.5 19.5 L 22.5 26.5 L 15.5 33.5"/><path d="M24.5 34 L 40.5 34"/></g></svg>
<div class="b" style="left:1261.30px;top:993.00px;width:55.50px;height:55.50px;border:3.6px solid #2a2d32;border-radius:14px;"></div>
<svg class="s" style="left:1261.30px;top:993.00px" width="56" height="56" viewBox="0 0 56 56"><g fill="none" stroke="#5e5f66" stroke-width="2.6"><path d="M14.5 14.5 L 14.5 40.7 L 41.5 40.7"/><path d="M20.5 34.5 L 38.5 16.5 M 29 16.5 L 38.5 16.5 L 38.5 26"/></g></svg>
<div class="b" style="left:1872.70px;top:993.00px;width:55.50px;height:55.50px;border:3.6px solid #2a2d32;border-radius:14px;"></div>
<svg class="s" style="left:1872.70px;top:993.00px" width="56" height="56" viewBox="0 0 56 56"><g fill="none" stroke="#5e5f66" stroke-width="2.6"><path d="M14.5 14.5 L 14.5 40.7 L 41.5 40.7"/><path d="M20.5 34.5 L 38.5 16.5 M 29 16.5 L 38.5 16.5 L 38.5 26"/></g></svg>
<div class="b" style="left:3161.50px;top:993.00px;width:55.50px;height:55.50px;border:3.6px solid #37404a;border-radius:14px;"></div>
<svg class="s" style="left:3161.50px;top:993.00px" width="56" height="56" viewBox="0 0 56 56"><g fill="none" stroke="#a9a9b5" stroke-width="2.2"><path d="M29 20.1 L 20 20.1 L 20 35.9 L 35.8 35.9 L 35.8 27.3"/><path d="M28.3 28 L 38.2 18.1 M 30.9 17.6 L 38.2 17.6 L 38.2 24.9"/></g></svg>
<div class="t" style="left:559.60px;top:1086.76px;font-size:31px;line-height:31px;color:#1a9fff;transform:scaleX(0.9231);transform-origin:0 0;">table_1_2</div>
<div class="t" style="left:1062.10px;top:1086.76px;font-size:31px;line-height:31px;color:#9d9dab;transform:scaleX(0.9619);transform-origin:0 0;">193.60 Mb</div>
<div class="t" style="left:1368.00px;top:1086.76px;font-size:31px;line-height:31px;color:#9d9dab;transform:scaleX(0.9299);transform-origin:0 0;">database_1</div>
<div class="t" style="left:1701.30px;top:1086.76px;font-size:31px;line-height:31px;color:#9d9dab;transform:scaleX(0.9675);transform-origin:0 0;">625320</div>
<div class="t" style="left:1978.90px;top:1086.76px;font-size:31px;line-height:31px;color:#9d9dab;transform:scaleX(0.9636);transform-origin:0 0;">295083</div>
<div class="t" style="left:2302.20px;top:1086.76px;font-size:31px;line-height:31px;color:#9d9dab;transform:scaleX(0.9608);transform-origin:0 0;">4.93 Mb</div>
<div class="t" style="left:2534.30px;top:1086.76px;font-size:31px;line-height:31px;color:#9d9dab;transform:scaleX(0.9615);transform-origin:0 0;">red-adqmc-adqm-1.ru-central1.internal</div>
<div class="b" style="left:955.20px;top:1075.00px;width:55.50px;height:55.50px;border:3.6px solid #2a2d32;border-radius:14px;"></div>
<svg class="s" style="left:955.20px;top:1075.00px" width="56" height="56" viewBox="0 0 56 56"><g fill="none" stroke="#5e5f66" stroke-width="2.6"><path d="M15.5 19.5 L 22.5 26.5 L 15.5 33.5"/><path d="M24.5 34 L 40.5 34"/></g></svg>
<div class="b" style="left:1261.30px;top:1075.00px;width:55.50px;height:55.50px;border:3.6px solid #2a2d32;border-radius:14px;"></div>
<svg class="s" style="left:1261.30px;top:1075.00px" width="56" height="56" viewBox="0 0 56 56"><g fill="none" stroke="#5e5f66" stroke-width="2.6"><path d="M14.5 14.5 L 14.5 40.7 L 41.5 40.7"/><path d="M20.5 34.5 L 38.5 16.5 M 29 16.5 L 38.5 16.5 L 38.5 26"/></g></svg>
<div class="b" style="left:1872.70px;top:1075.00px;width:55.50px;height:55.50px;border:3.6px solid #2a2d32;border-radius:14px;"></div>
<svg class="s" style="left:1872.70px;top:1075.00px" width="56" height="56" viewBox="0 0 56 56"><g fill="none" stroke="#5e5f66" stroke-width="2.6"><path d="M14.5 14.5 L 14.5 40.7 L 41.5 40.7"/><path d="M20.5 34.5 L 38.5 16.5 M 29 16.5 L 38.5 16.5 L 38.5 26"/></g></svg>
<div class="b" style="left:3161.50px;top:1075.00px;width:55.50px;height:55.50px;border:3.6px solid #37404a;border-radius:14px;"></div>
<svg class="s" style="left:3161.50px;top:1075.00px" width="56" height="56" viewBox="0 0 56 56"><g fill="none" stroke="#a9a9b5" stroke-width="2.2"><path d="M29 20.1 L 20 20.1 L 20 35.9 L 35.8 35.9 L 35.8 27.3"/><path d="M28.3 28 L 38.2 18.1 M 30.9 17.6 L 38.2 17.6 L 38.2 24.9"/></g></svg>
<div class="t" style="left:559.60px;top:1168.76px;font-size:31px;line-height:31px;color:#1a9fff;transform:scaleX(0.9231);transform-origin:0 0;">table_3_3</div>
<div class="t" style="left:1062.10px;top:1168.76px;font-size:31px;line-height:31px;color:#9d9dab;transform:scaleX(0.9619);transform-origin:0 0;">161.63 Mb</div>
<div class="t" style="left:1368.00px;top:1168.76px;font-size:31px;line-height:31px;color:#9d9dab;transform:scaleX(0.9299);transform-origin:0 0;">database_3</div>
<div class="t" style="left:1701.30px;top:1168.76px;font-size:31px;line-height:31px;color:#9d9dab;transform:scaleX(0.9675);transform-origin:0 0;">524275</div>
<div class="t" style="left:1978.90px;top:1168.76px;font-size:31px;line-height:31px;color:#9d9dab;transform:scaleX(0.9636);transform-origin:0 0;">1667</div>
<div class="t" style="left:2302.20px;top:1168.76px;font-size:31px;line-height:31px;color:#9d9dab;transform:scaleX(0.9608);transform-origin:0 0;">6.07 Mb</div>
<div class="t" style="left:2534.30px;top:1168.76px;font-size:31px;line-height:31px;color:#9d9dab;transform:scaleX(0.9615);transform-origin:0 0;">red-adqmc-adqm-4.ru-central1.internal</div>
<div class="b" style="left:955.20px;top:1157.00px;width:55.50px;height:55.50px;border:3.6px solid #2a2d32;border-radius:14px;"></div>
<svg class="s" style="left:955.20px;top:1157.00px" width="56" height="56" viewBox="0 0 56 56"><g fill="none" stroke="#5e5f66" stroke-width="2.6"><path d="M15.5 19.5 L 22.5 26.5 L 15.5 33.5"/><path d="M24.5 34 L 40.5 34"/></g></svg>
<div class="b" style="left:1261.30px;top:1157.00px;width:55.50px;height:55.50px;border:3.6px solid #2a2d32;border-radius:14px;"></div>
<svg class="s" style="left:1261.30px;top:1157.00px" width="56" height="56" viewBox="0 0 56 56"><g fill="none" stroke="#5e5f66" stroke-width="2.6"><path d="M14.5 14.5 L 14.5 40.7 L 41.5 40.7"/><path d="M20.5 34.5 L 38.5 16.5 M 29 16.5 L 38.5 16.5 L 38.5 26"/></g></svg>
<div class="b" style="left:1872.70px;top:1157.00px;width:55.50px;height:55.50px;border:3.6px solid #2a2d32;border-radius:14px;"></div>
<svg class="s" style="left:1872.70px;top:1157.00px" width="56" height="56" viewBox="0 0 56 56"><g fill="none" stroke="#5e5f66" stroke-width="2.6"><path d="M14.5 14.5 L 14.5 40.7 L 41.5 40.7"/><path d="M20.5 34.5 L 38.5 16.5 M 29 16.5 L 38.5 16.5 L 38.5 26"/></g></svg>
<div class="b" style="left:3161.50px;top:1157.00px;width:55.50px;height:55.50px;border:3.6px solid #37404a;border-radius:14px;"></div>
<svg class="s" style="left:3161.50px;top:1157.00px" width="56" height="56" viewBox="0 0 56 56"><g fill="none" stroke="#a9a9b5" stroke-width="2.2"><path d="M29 20.1 L 20 20.1 L 20 35.9 L 35.8 35.9 L 35.8 27.3"/><path d="M28.3 28 L 38.2 18.1 M 30.9 17.6 L 38.2 17.6 L 38.2 24.9"/></g></svg>
<div class="t" style="left:559.60px;top:1250.76px;font-size:31px;line-height:31px;color:#1a9fff;transform:scaleX(0.9231);transform-origin:0 0;">table_2_2</div>
<div class="t" style="left:1062.10px;top:1250.76px;font-size:31px;line-height:31px;color:#9d9dab;transform:scaleX(0.9619);transform-origin:0 0;">90.28 Mb</div>
<div class="t" style="left:1368.00px;top:1250.76px;font-size:31px;line-height:31px;color:#9d9dab;transform:scaleX(0.9299);transform-origin:0 0;">database_2</div>
<div class="t" style="left:1701.30px;top:1250.76px;font-size:31px;line-height:31px;color:#9d9dab;transform:scaleX(0.9675);transform-origin:0 0;">505017</div>
<div class="t" style="left:1978.90px;top:1250.76px;font-size:31px;line-height:31px;color:#9d9dab;transform:scaleX(0.9636);transform-origin:0 0;">339461</div>
<div class="t" style="left:2302.20px;top:1250.76px;font-size:31px;line-height:31px;color:#9d9dab;transform:scaleX(0.9608);transform-origin:0 0;">7.82 Mb</div>
<div class="t" style="left:2534.30px;top:1250.76px;font-size:31px;line-height:31px;color:#9d9dab;transform:scaleX(0.9615);transform-origin:0 0;">red-adqmc-adqm-4.ru-central1.internal</div>
<div class="b" style="left:955.20px;top:1239.00px;width:55.50px;height:55.50px;border:3.6px solid #2a2d32;border-radius:14px;"></div>
<svg class="s" style="left:955.20px;top:1239.00px" width="56" height="56" viewBox="0 0 56 56"><g fill="none" stroke="#5e5f66" stroke-width="2.6"><path d="M15.5 19.5 L 22.5 26.5 L 15.5 33.5"/><path d="M24.5 34 L 40.5 34"/></g></svg>
<div class="b" style="left:1261.30px;top:1239.00px;width:55.50px;height:55.50px;border:3.6px solid #2a2d32;border-radius:14px;"></div>
<svg class="s" style="left:1261.30px;top:1239.00px" width="56" height="56" viewBox="0 0 56 56"><g fill="none" stroke="#5e5f66" stroke-width="2.6"><path d="M14.5 14.5 L 14.5 40.7 L 41.5 40.7"/><path d="M20.5 34.5 L 38.5 16.5 M 29 16.5 L 38.5 16.5 L 38.5 26"/></g></svg>
<div class="b" style="left:1872.70px;top:1239.00px;width:55.50px;height:55.50px;border:3.6px solid #2a2d32;border-radius:14px;"></div>
<svg class="s" style="left:1872.70px;top:1239.00px" width="56" height="56" viewBox="0 0 56 56"><g fill="none" stroke="#5e5f66" stroke-width="2.6"><path d="M14.5 14.5 L 14.5 40.7 L 41.5 40.7"/><path d="M20.5 34.5 L 38.5 16.5 M 29 16.5 L 38.5 16.5 L 38.5 26"/></g></svg>
<div class="b" style="left:3161.50px;top:1239.00px;width:55.50px;height:55.50px;border:3.6px solid #37404a;border-radius:14px;"></div>
<svg class="s" style="left:3161.50px;top:1239.00px" width="56" height="56" viewBox="0 0 56 56"><g fill="none" stroke="#a9a9b5" stroke-width="2.2"><path d="M29 20.1 L 20 20.1 L 20 35.9 L 35.8 35.9 L 35.8 27.3"/><path d="M28.3 28 L 38.2 18.1 M 30.9 17.6 L 38.2 17.6 L 38.2 24.9"/></g></svg>
<div class="t" style="left:559.60px;top:1332.76px;font-size:31px;line-height:31px;color:#1a9fff;transform:scaleX(0.9231);transform-origin:0 0;">table_3_2</div>
<div class="t" style="left:1062.10px;top:1332.76px;font-size:31px;line-height:31px;color:#9d9dab;transform:scaleX(0.9619);transform-origin:0 0;">55.80 Mb</div>
<div class="t" style="left:1368.00px;top:1332.76px;font-size:31px;line-height:31px;color:#9d9dab;transform:scaleX(0.9299);transform-origin:0 0;">database_3</div>
<div class="t" style="left:1701.30px;top:1332.76px;font-size:31px;line-height:31px;color:#9d9dab;transform:scaleX(0.9675);transform-origin:0 0;">511602</div>
<div class="t" style="left:1978.90px;top:1332.76px;font-size:31px;line-height:31px;color:#9d9dab;transform:scaleX(0.9636);transform-origin:0 0;">69215</div>
<div class="t" style="left:2302.20px;top:1332.76px;font-size:31px;line-height:31px;color:#9d9dab;transform:scaleX(0.9608);transform-origin:0 0;">5.90 Mb</div>
<div class="t" style="left:2534.30px;top:1332.76px;font-size:31px;line-height:31px;color:#9d9dab;transform:scaleX(0.9615);transform-origin:0 0;">red-adqmc-adqm-4.ru-central1.internal</div>
<div class="b" style="left:955.20px;top:1321.00px;width:55.50px;height:55.50px;border:3.6px solid #2a2d32;border-radius:14px;"></div>
<svg class="s" style="left:955.20px;top:1321.00px" width="56" height="56" viewBox="0 0 56 56"><g fill="none" stroke="#5e5f66" stroke-width="2.6"><path d="M15.5 19.5 L 22.5 26.5 L 15.5 33.5"/><path d="M24.5 34 L 40.5 34"/></g></svg>
<div class="b" style="left:1261.30px;top:1321.00px;width:55.50px;height:55.50px;border:3.6px solid #2a2d32;border-radius:14px;"></div>
<svg class="s" style="left:1261.30px;top:1321.00px" width="56" height="56" viewBox="0 0 56 56"><g fill="none" stroke="#5e5f66" stroke-width="2.6"><path d="M14.5 14.5 L 14.5 40.7 L 41.5 40.7"/><path d="M20.5 34.5 L 38.5 16.5 M 29 16.5 L 38.5 16.5 L 38.5 26"/></g></svg>
<div class="b" style="left:1872.70px;top:1321.00px;width:55.50px;height:55.50px;border:3.6px solid #2a2d32;border-radius:14px;"></div>
<svg class="s" style="left:1872.70px;top:1321.00px" width="56" height="56" viewBox="0 0 56 56"><g fill="none" stroke="#5e5f66" stroke-width="2.6"><path d="M14.5 14.5 L 14.5 40.7 L 41.5 40.7"/><path d="M20.5 34.5 L 38.5 16.5 M 29 16.5 L 38.5 16.5 L 38.5 26"/></g></svg>
<div class="b" style="left:3161.50px;top:1321.00px;width:55.50px;height:55.50px;border:3.6px solid #37404a;border-radius:14px;"></div>
<svg class="s" style="left:3161.50px;top:1321.00px" width="56" height="56" viewBox="0 0 56 56"><g fill="none" stroke="#a9a9b5" stroke-width="2.2"><path d="M29 20.1 L 20 20.1 L 20 35.9 L 35.8 35.9 L 35.8 27.3"/><path d="M28.3 28 L 38.2 18.1 M 30.9 17.6 L 38.2 17.6 L 38.2 24.9"/></g></svg>
<div class="t" style="left:559.60px;top:1414.76px;font-size:31px;line-height:31px;color:#1a9fff;transform:scaleX(0.9231);transform-origin:0 0;">table_3_3</div>
<div class="t" style="left:1062.10px;top:1414.76px;font-size:31px;line-height:31px;color:#9d9dab;transform:scaleX(0.9619);transform-origin:0 0;">45.72 Mb</div>
<div class="t" style="left:1368.00px;top:1414.76px;font-size:31px;line-height:31px;color:#9d9dab;transform:scaleX(0.9299);transform-origin:0 0;">database_3</div>
<div class="t" style="left:1701.30px;top:1414.76px;font-size:31px;line-height:31px;color:#9d9dab;transform:scaleX(0.9675);transform-origin:0 0;">176249</div>
<div class="t" style="left:1978.90px;top:1414.76px;font-size:31px;line-height:31px;color:#9d9dab;transform:scaleX(0.9636);transform-origin:0 0;">1674</div>
<div class="t" style="left:2302.20px;top:1414.76px;font-size:31px;line-height:31px;color:#9d9dab;transform:scaleX(0.9608);transform-origin:0 0;">8.72 Mb</div>
<div class="t" style="left:2534.30px;top:1414.76px;font-size:31px;line-height:31px;color:#9d9dab;transform:scaleX(0.9615);transform-origin:0 0;">red-adqmc-adqm-3.ru-central1.internal</div>
<div class="b" style="left:955.20px;top:1403.00px;width:55.50px;height:55.50px;border:3.6px solid #2a2d32;border-radius:14px;"></div>
<svg class="s" style="left:955.20px;top:1403.00px" width="56" height="56" viewBox="0 0 56 56"><g fill="none" stroke="#5e5f66" stroke-width="2.6"><path d="M15.5 19.5 L 22.5 26.5 L 15.5 33.5"/><path d="M24.5 34 L 40.5 34"/></g></svg>
<div class="b" style="left:1261.30px;top:1403.00px;width:55.50px;height:55.50px;border:3.6px solid #2a2d32;border-radius:14px;"></div>
<svg class="s" style="left:1261.30px;top:1403.00px" width="56" height="56" viewBox="0 0 56 56"><g fill="none" stroke="#5e5f66" stroke-width="2.6"><path d="M14.5 14.5 L 14.5 40.7 L 41.5 40.7"/><path d="M20.5 34.5 L 38.5 16.5 M 29 16.5 L 38.5 16.5 L 38.5 26"/></g></svg>
<div class="b" style="left:1872.70px;top:1403.00px;width:55.50px;height:55.50px;border:3.6px solid #2a2d32;border-radius:14px;"></div>
<svg class="s" style="left:1872.70px;top:1403.00px" width="56" height="56" viewBox="0 0 56 56"><g fill="none" stroke="#5e5f66" stroke-width="2.6"><path d="M14.5 14.5 L 14.5 40.7 L 41.5 40.7"/><path d="M20.5 34.5 L 38.5 16.5 M 29 16.5 L 38.5 16.5 L 38.5 26"/></g></svg>
<div class="b" style="left:3161.50px;top:1403.00px;width:55.50px;height:55.50px;border:3.6px solid #37404a;border-radius:14px;"></div>
<svg class="s" style="left:3161.50px;top:1403.00px" width="56" height="56" viewBox="0 0 56 56"><g fill="none" stroke="#a9a9b5" stroke-width="2.2"><path d="M29 20.1 L 20 20.1 L 20 35.9 L 35.8 35.9 L 35.8 27.3"/><path d="M28.3 28 L 38.2 18.1 M 30.9 17.6 L 38.2 17.6 L 38.2 24.9"/></g></svg>
<div class="t" style="left:559.60px;top:1496.76px;font-size:31px;line-height:31px;color:#1a9fff;transform:scaleX(0.9231);transform-origin:0 0;">table_3_3</div>
<div class="t" style="left:1062.10px;top:1496.76px;font-size:31px;line-height:31px;color:#9d9dab;transform:scaleX(0.9619);transform-origin:0 0;">38.71 Mb</div>
<div class="t" style="left:1368.00px;top:1496.76px;font-size:31px;line-height:31px;color:#9d9dab;transform:scaleX(0.9299);transform-origin:0 0;">database_3</div>
<div class="t" style="left:1701.30px;top:1496.76px;font-size:31px;line-height:31px;color:#9d9dab;transform:scaleX(0.9675);transform-origin:0 0;">149252</div>
<div class="t" style="left:1978.90px;top:1496.76px;font-size:31px;line-height:31px;color:#9d9dab;transform:scaleX(0.9636);transform-origin:0 0;">1655</div>
<div class="t" style="left:2302.20px;top:1496.76px;font-size:31px;line-height:31px;color:#9d9dab;transform:scaleX(0.9608);transform-origin:0 0;">14.25 Mb</div>
<div class="t" style="left:2534.30px;top:1496.76px;font-size:31px;line-height:31px;color:#9d9dab;transform:scaleX(0.9615);transform-origin:0 0;">red-adqmc-adqm-2.ru-central1.internal</div>
<div class="b" style="left:955.20px;top:1485.00px;width:55.50px;height:55.50px;border:3.6px solid #2a2d32;border-radius:14px;"></div>
<svg class="s" style="left:955.20px;top:1485.00px" width="56" height="56" viewBox="0 0 56 56"><g fill="none" stroke="#5e5f66" stroke-width="2.6"><path d="M15.5 19.5 L 22.5 26.5 L 15.5 33.5"/><path d="M24.5 34 L 40.5 34"/></g></svg>
<div class="b" style="left:1261.30px;top:1485.00px;width:55.50px;height:55.50px;border:3.6px solid #2a2d32;border-radius:14px;"></div>
<svg class="s" style="left:1261.30px;top:1485.00px" width="56" height="56" viewBox="0 0 56 56"><g fill="none" stroke="#5e5f66" stroke-width="2.6"><path d="M14.5 14.5 L 14.5 40.7 L 41.5 40.7"/><path d="M20.5 34.5 L 38.5 16.5 M 29 16.5 L 38.5 16.5 L 38.5 26"/></g></svg>
<div class="b" style="left:1872.70px;top:1485.00px;width:55.50px;height:55.50px;border:3.6px solid #2a2d32;border-radius:14px;"></div>
<svg class="s" style="left:1872.70px;top:1485.00px" width="56" height="56" viewBox="0 0 56 56"><g fill="none" stroke="#5e5f66" stroke-width="2.6"><path d="M14.5 14.5 L 14.5 40.7 L 41.5 40.7"/><path d="M20.5 34.5 L 38.5 16.5 M 29 16.5 L 38.5 16.5 L 38.5 26"/></g></svg>
<div class="b" style="left:3161.50px;top:1485.00px;width:55.50px;height:55.50px;border:3.6px solid #37404a;border-radius:14px;"></div>
<svg class="s" style="left:3161.50px;top:1485.00px" width="56" height="56" viewBox="0 0 56 56"><g fill="none" stroke="#a9a9b5" stroke-width="2.2"><path d="M29 20.1 L 20 20.1 L 20 35.9 L 35.8 35.9 L 35.8 27.3"/><path d="M28.3 28 L 38.2 18.1 M 30.9 17.6 L 38.2 17.6 L 38.2 24.9"/></g></svg>
<div class="t" style="left:783.00px;top:1000.27px;font-size:33px;line-height:33px;color:#3dbd8f;transform:scaleX(0.9255);transform-origin:0 0;">нажмите</div>
<svg class="s" style="left:830.00px;top:1025.00px" width="130" height="90" viewBox="0 0 130 90"><g stroke="#0fa57c" fill="#0fa57c"><path d="M12.7 10.8 L 106 70" stroke-width="3.6"/><path d="M120.8 78.3 L 95.5 71.5 L 104.3 58.8 Z" stroke-width="1"/></g></svg>
</body></html>
